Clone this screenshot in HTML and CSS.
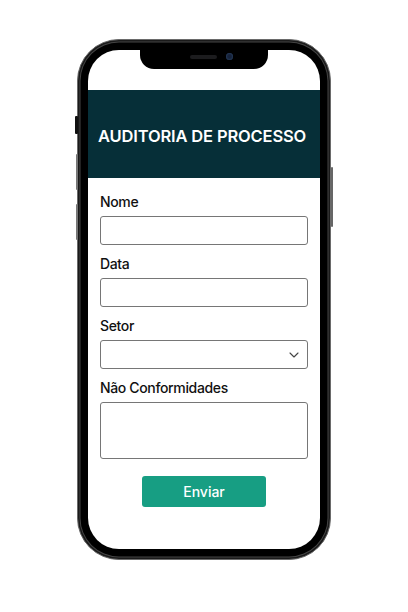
FILE: index.html
```html
<!DOCTYPE html>
<html lang="pt">
<head>
<meta charset="utf-8">
<title>Auditoria de Processo</title>
<link rel="stylesheet" href="styles.css">
</head>
<body>
<div class="stage">
  <div class="phone">
    <span class="btn btn-mute"></span>
    <span class="btn btn-vol-up"></span>
    <span class="btn btn-vol-down"></span>
    <span class="btn btn-power"></span>
    <div class="screen">
      <div class="notch"><span class="speaker"></span><span class="camera"></span></div>
      <header class="app-header">
        <h1 class="app-title">AUDITORIA DE PROCESSO</h1>
      </header>
      <form class="form">
        <label class="field-label">Nome</label>
        <div class="input"></div>
        <label class="field-label">Data</label>
        <div class="input"></div>
        <label class="field-label">Setor</label>
        <div class="input select">
          <svg class="chevron" width="10" height="6" viewBox="0 0 10 6"><path d="M1 1l4 4 4-4" fill="none" stroke="#444" stroke-width="1.1" stroke-linecap="round" stroke-linejoin="round"/></svg>
        </div>
        <label class="field-label">Não Conformidades</label>
        <div class="input textarea"></div>
        <div class="actions">
          <button type="button" class="submit">Enviar</button>
        </div>
      </form>
    </div>
  </div>
</div>
</body>
</html>
```
FILE: styles.css
```css
* { box-sizing: border-box; }
html, body { margin: 0; padding: 0; background: #fff; }
body { font-family: Inter, "Noto Sans", sans-serif; }

.stage {
  padding-top: 39px;
  display: flex;
  justify-content: center;
}

.phone {
  position: relative;
  width: 254px;
  height: 521px;
  background: #000;
  border-radius: 42px;
  padding: 10px;
  border: 1.5px solid #6a6a6a;
  box-shadow: inset 0 0 0 1.5px #1a1a1a, inset 0 0 0 2.5px #444;
}

.btn {
  position: absolute;
  width: 3px;
  background: #3a3a3a;
  border-radius: 1px;
}
.btn-mute { left: -3.5px; top: 76px; height: 18px; background: #111; }
.btn-vol-up { top: 114px; height: 36px; background: #777; width: 2px; left: -2.5px; }
.btn-vol-down { top: 164px; height: 36px; background: #777; width: 2px; left: -2.5px; }
.btn-power { right: -3px; top: 127px; height: 60px; background: #666; width: 2px; }

.screen {
  position: relative;
  height: 100%;
  background: #fff;
  border-radius: 31px;
  overflow: hidden;
  display: flex;
  flex-direction: column;
}

.notch {
  position: absolute;
  left: 52px;
  top: 0;
  width: 128px;
  height: 19px;
  background: #000;
  border-radius: 0 0 14px 14px;
}
.speaker {
  position: absolute;
  left: 50px;
  top: 5px;
  width: 27px;
  height: 4px;
  border-radius: 2px;
  background: #1c1c1e;
}
.camera {
  position: absolute;
  left: 86px;
  top: 3px;
  width: 7px;
  height: 7px;
  border-radius: 50%;
  background: #16223a;
  box-shadow: inset 0 0 2px #3a5a80;
}

.app-header {
  margin-top: 40px;
  height: 88px;
  background: #062f38;
  display: flex;
  align-items: center;
  padding: 4px 0 0 10px;
}
.app-title {
  margin: 0;
  color: #fff;
  font-size: 16.5px;
  font-weight: 600;
  letter-spacing: -0.15px;
}

.form {
  padding: 15px 12px 0 12px;
  display: flex;
  flex-direction: column;
}
.field-label {
  font-size: 14px;
  line-height: 17px;
  font-weight: 500;
  letter-spacing: -0.35px;
  color: #111;
  margin-bottom: 6px;
}
.input {
  height: 29px;
  border: 1px solid #767676;
  border-radius: 3px;
  margin-bottom: 10px;
  background: #fff;
}
.select {
  display: flex;
  align-items: center;
  justify-content: flex-end;
  padding-right: 8px;
}
.textarea { height: 57px; }

.actions {
  display: flex;
  justify-content: center;
  padding-top: 7px;
}
.submit {
  width: 124px;
  height: 31px;
  border: none;
  border-radius: 3px;
  background: #179e83;
  color: #fff;
  font-family: Inter, "Noto Sans", sans-serif;
  font-size: 14px;
  font-weight: 500;
}
```
